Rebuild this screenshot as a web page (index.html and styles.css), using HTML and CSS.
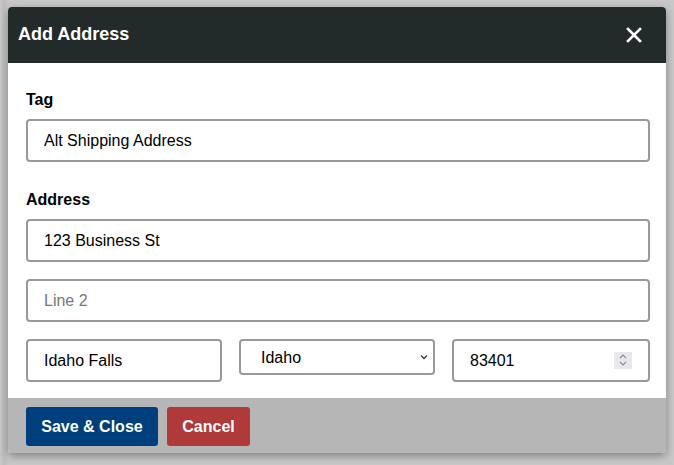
FILE: index.html
```html
<!DOCTYPE html>
<html>
<head>
<meta charset="utf-8">
<link rel="stylesheet" href="styles.css">
</head>
<body>
<div class="dialog">
  <div class="dialog-header">
    <h1 class="dialog-title">Add Address</h1>
    <button class="close-btn" aria-label="Close">
      <svg width="16" height="16" viewBox="0 0 16 16"><path d="M2 2 L14 14 M14 2 L2 14" stroke="#fff" stroke-width="2.6" stroke-linecap="square" fill="none"/></svg>
    </button>
  </div>
  <div class="dialog-body">
    <label class="field-label">Tag</label>
    <input class="text-input" type="text" value="Alt Shipping Address">
    <label class="field-label section-gap">Address</label>
    <input class="text-input" type="text" value="123 Business St">
    <input class="text-input row-gap" type="text" placeholder="Line 2">
    <div class="city-row">
      <input class="text-input" type="text" value="Idaho Falls">
      <div class="select-wrap">
        <select class="state-select"><option>Idaho</option></select>
        <svg class="chevron" width="8" height="6" viewBox="0 0 8 6"><path d="M1 1.5 L4 4.5 L7 1.5" stroke="#333" stroke-width="1.3" fill="none"/></svg>
      </div>
      <div class="zip-wrap">
        <input class="zip-input" type="text" value="83401">
        <span class="spinner">
          <svg width="18" height="16" viewBox="0 0 18 16"><path d="M6 6 L9 3 L12 6 M6 10 L9 13 L12 10" stroke="#8a8a90" stroke-width="1.1" fill="none"/></svg>
        </span>
      </div>
    </div>
  </div>
  <div class="dialog-footer">
    <button class="btn btn-primary">Save &amp; Close</button>
    <button class="btn btn-danger">Cancel</button>
  </div>
</div>
</body>
</html>
```

FILE: styles.css
```css
* { box-sizing: border-box; }
html, body { margin: 0; padding: 0; }
body {
  width: 674px;
  height: 465px;
  overflow: hidden;
  background: linear-gradient(90deg, #c9c9c9 0, #bdbdbd 4px, #c8c8c8 9px, #c8c8c8 666px, #c4c6c9 668px, #c8c8c8 674px);
  font-family: "Liberation Sans", Arial, sans-serif;
  padding: 7px 0 0 8px;
}
.dialog {
  width: 658px;
  border-radius: 4px;
  overflow: hidden;
  background: #fff;
  box-shadow: 0 3px 8px rgba(0,0,0,0.35);
}
.dialog-header {
  height: 56px;
  background: #232b2a;
  display: flex;
  align-items: center;
  justify-content: space-between;
  padding: 0 24px 0 10px;
}
.dialog-title {
  margin: 0;
  color: #fff;
  font-size: 18px;
  font-weight: 700;
  line-height: 20px;
  position: relative;
  top: -1px;
}
.close-btn {
  background: none;
  border: 0;
  padding: 0;
  width: 16px;
  height: 16px;
  display: flex;
  cursor: pointer;
}
.dialog-body {
  padding: 28px 16px 16px 18px;
  display: flex;
  flex-direction: column;
}
.field-label {
  display: block;
  font-size: 16px;
  font-weight: 700;
  line-height: 18px;
  color: #000;
  margin-bottom: 10px;
}
.section-gap { margin-top: 29px; }
.text-input {
  width: 100%;
  height: 43px;
  border: 2px solid #999;
  border-radius: 4px;
  padding: 0 16px;
  font-family: "Liberation Sans", Arial, sans-serif;
  font-size: 16px;
  color: #000;
  background: #fff;
  outline: none;
}
.text-input::placeholder { color: #777; }
.row-gap { margin-top: 17px; }
.city-row {
  margin-top: 17px;
  display: grid;
  grid-template-columns: 196px 196px 198px;
  column-gap: 17px;
  align-items: start;
}
.select-wrap {
  position: relative;
  height: 36px;
}
.state-select {
  appearance: none;
  -webkit-appearance: none;
  width: 100%;
  height: 36px;
  border: 2px solid #999;
  border-radius: 4px;
  background: #fff;
  padding: 0 20px;
  font-family: "Liberation Sans", Arial, sans-serif;
  font-size: 16px;
  color: #000;
  outline: none;
}
.chevron {
  position: absolute;
  right: 7px;
  top: 15px;
  pointer-events: none;
}
.zip-wrap {
  height: 43px;
  border: 2px solid #999;
  border-radius: 4px;
  display: flex;
  align-items: center;
  padding: 0 16px 0 16px;
  background: #fff;
}
.zip-input {
  flex: 1;
  min-width: 0;
  border: 0;
  outline: none;
  padding: 0;
  font-family: "Liberation Sans", Arial, sans-serif;
  font-size: 16px;
  color: #000;
  background: transparent;
}
.spinner {
  width: 18px;
  height: 17px;
  background: #e8e7ec;
  display: flex;
  align-items: center;
  justify-content: center;
  margin-top: -1px;
}
.dialog-footer {
  background: #b6b6b6;
  padding: 9px 18px 7px;
  display: flex;
  gap: 9px;
}
.btn {
  height: 39px;
  border: 0;
  border-radius: 3px;
  color: #fff;
  font-family: "Liberation Sans", Arial, sans-serif;
  font-size: 16px;
  font-weight: 700;
  padding: 0 15px;
  cursor: pointer;
}
.btn-primary { background: #003f7d; width: 132px; }
.btn-danger { background: #b03a3a; width: 83px; }
```
